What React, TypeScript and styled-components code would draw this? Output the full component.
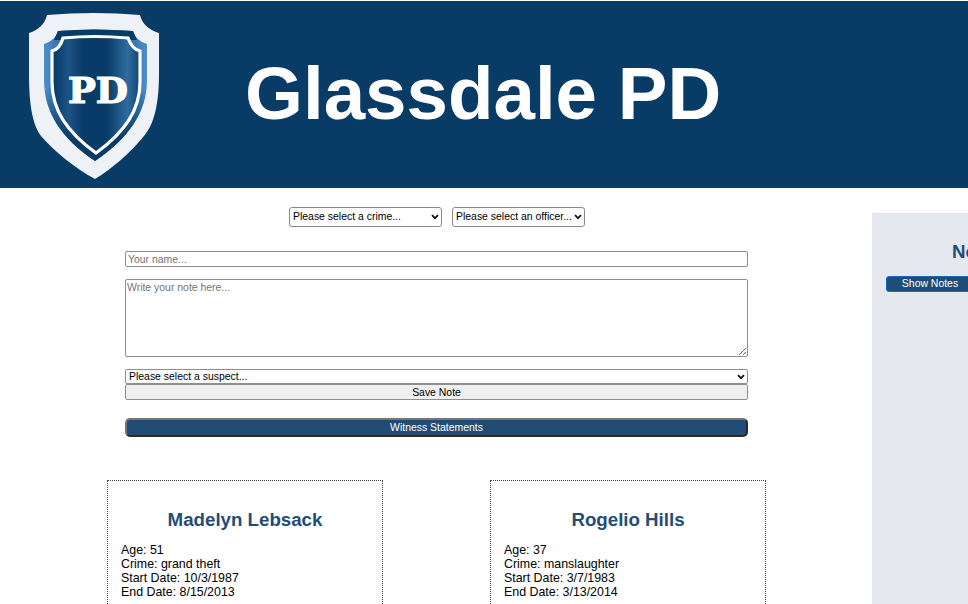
import React from "react";
import styled, { createGlobalStyle, css } from "styled-components";

const suspects = [
  { name: "Madelyn Lebsack", age: 51, crime: "grand theft", start: "10/3/1987", end: "8/15/2013" },
  { name: "Rogelio Hills", age: 37, crime: "manslaughter", start: "3/7/1983", end: "3/13/2014" },
];

const rimPath =
  "M29 19 Q65 16 104 19 Q107 29 118 32 L118 68 C118 100 100 126 66 149 C32 126 15 100 15 68 L15 32 Q26 29 29 19 Z";

const Logo: React.FC = () => (
  <LogoSvg viewBox="0 0 130 168" aria-label="Glassdale PD badge">
    <defs>
      <linearGradient id="rim" x1="0" x2="1" y1="0" y2="0">
        <stop offset="0" stopColor="#4d8fcb" />
        <stop offset="0.2" stopColor="#2c6ba6" />
        <stop offset="0.8" stopColor="#2c6ba6" />
        <stop offset="1" stopColor="#4d8fcb" />
      </linearGradient>
      <linearGradient id="rimFade" x1="0" x2="0" y1="0" y2="1">
        <stop offset="0.45" stopColor="#083b66" stopOpacity="0" />
        <stop offset="0.85" stopColor="#083b66" stopOpacity="1" />
      </linearGradient>
      <linearGradient id="core" x1="0" x2="1" y1="0" y2="0">
        <stop offset="0" stopColor="#083b66" />
        <stop offset="0.1" stopColor="#0f4674" />
        <stop offset="0.18" stopColor="#1d5488" />
        <stop offset="0.36" stopColor="#083b66" />
        <stop offset="0.62" stopColor="#083b66" />
        <stop offset="0.86" stopColor="#2f6c9f" />
        <stop offset="1" stopColor="#0f4674" />
      </linearGradient>
    </defs>
    <path
      d="M18 3 Q65 -1 111 3 Q114 16 130 21 L130 62 C130 100 122 116 115 124 C102 140 84 156 66 167 C46 156 26 140 12 124 C5 114 0 98 0 62 L0 21 Q15 16 18 3 Z"
      fill="#eef2f6"
    />
    <path d={rimPath} fill="url(#rim)" />
    <path d={rimPath} fill="url(#rimFade)" />
    <path d="M29 19 Q65 16 104 19 L108 28 L25 28 Z" fill="#083b66" />
    <path
      d="M34 26 Q65 23 99 26 Q103 37 111 39 L111 70 C111 98 96 120 67 141 C38 120 23 98 23 70 L23 39 Q31 37 34 26 Z"
      fill="url(#core)"
      stroke="#ffffff"
      strokeWidth="3.2"
    />
    <PdMark x="39" y="91" textLength="60" lengthAdjust="spacingAndGlyphs">
      PD
    </PdMark>
  </LogoSvg>
);

export default function App() {
  return (
    <Page>
      <GlobalStyle />
      <Banner>
        <Logo />
        <Title>Glassdale PD</Title>
      </Banner>
      <Content>
        <Main>
          <Filters>
            <CrimeSelect>
              <option>Please select a crime...</option>
            </CrimeSelect>
            <OfficerSelect>
              <option>Please select an officer...</option>
            </OfficerSelect>
          </Filters>
          <NoteForm>
            <NameInput placeholder="Your name..." />
            <NoteText placeholder="Write your note here..." />
            <SuspectGroup>
              <SuspectSelect>
                <option>Please select a suspect...</option>
              </SuspectSelect>
              <SaveButton type="button">Save Note</SaveButton>
            </SuspectGroup>
            <WitnessButton type="button">Witness Statements</WitnessButton>
          </NoteForm>
          <Cards>
            {suspects.map((s) => (
              <Card key={s.name}>
                <CardName>{s.name}</CardName>
                <CardLine>Age: {s.age}</CardLine>
                <CardLine>Crime: {s.crime}</CardLine>
                <CardLine>Start Date: {s.start}</CardLine>
                <CardLine>End Date: {s.end}</CardLine>
              </Card>
            ))}
          </Cards>
        </Main>
        <Sidebar>
          <SidebarTitle>Notes</SidebarTitle>
          <ShowNotes type="button">Show Notes</ShowNotes>
        </Sidebar>
      </Content>
    </Page>
  );
}

const GlobalStyle = createGlobalStyle`
  html, body {
    margin: 0;
    padding: 0;
    background: #fff;
    overflow: hidden;
  }
  ::placeholder {
    color: #757575;
  }
`;

const chevron = css`
  appearance: none;
  background-color: #fff;
  background-image: url("data:image/svg+xml,%3Csvg xmlns='http://www.w3.org/2000/svg' width='8' height='6' viewBox='0 0 8 6'%3E%3Cpath d='M1 1.2 L4 4.2 L7 1.2' fill='none' stroke='%23111' stroke-width='1.7'/%3E%3C/svg%3E");
  background-repeat: no-repeat;
  background-position: right 2px center;
`;

const Page = styled.div`
  width: 968px;
  height: 604px;
  overflow: hidden;
  font-family: "Liberation Sans", Arial, sans-serif;
  color: #000;
`;

const Banner = styled.header`
  display: flex;
  align-items: center;
  height: 187px;
  margin-top: 1px;
  padding-left: 29px;
  box-sizing: border-box;
  background: #083b66;
`;

const LogoSvg = styled.svg`
  width: 130px;
  height: 168px;
  flex-shrink: 0;
  margin-top: 2px;
  overflow: visible;
`;

const PdMark = styled.text`
  font-family: "DejaVu Serif", serif;
  font-weight: 900;
  font-size: 35px;
  fill: #fff;
  stroke: #fff;
  stroke-width: 1.2px;
`;

const Title = styled.h1`
  margin: 0 0 3px 86px;
  font-size: 74.5px;
  font-weight: 700;
  color: #fff;
  white-space: nowrap;
`;

const Content = styled.div`
  display: flex;
  align-items: flex-start;
  width: 1100px;
`;

const Main = styled.main`
  width: 872px;
  flex-shrink: 0;
  padding-top: 19px;
  box-sizing: border-box;
`;

const Filters = styled.div`
  display: flex;
  justify-content: center;
  gap: 10px;
  padding-left: 2px;
`;

const BaseSelect = styled.select`
  ${chevron}
  height: 20px;
  padding: 0 0 1px 3px;
  font-family: inherit;
  font-size: 10.45px;
  color: #000;
  border: 1px solid #8a8a8a;
  border-radius: 3px;
`;

const CrimeSelect = styled(BaseSelect)`
  width: 153px;
`;

const OfficerSelect = styled(BaseSelect)`
  width: 133px;
`;

const NoteForm = styled.form`
  display: flex;
  flex-direction: column;
  width: 623px;
  margin: 24px 0 0 125px;
`;

const fieldBorder = css`
  box-sizing: border-box;
  border: 1px solid #8f8f8f;
  border-radius: 2px;
  font-family: inherit;
  font-size: 10.45px;
`;

const NameInput = styled.input`
  ${fieldBorder}
  height: 16px;
  padding: 0 2px;
`;

const NoteText = styled.textarea`
  ${fieldBorder}
  height: 78px;
  margin-top: 12px;
  padding: 2px 1px;
  display: block;
`;

const SuspectGroup = styled.div`
  display: flex;
  flex-direction: column;
  margin-top: 12px;
`;

const SuspectSelect = styled.select`
  ${fieldBorder}
  ${chevron}
  height: 15px;
  padding: 0 0 1px 3px;
  color: #000;
`;

const SaveButton = styled.button`
  ${fieldBorder}
  height: 16px;
  padding: 0;
  background: #efefef;
  color: #000;
`;

const WitnessButton = styled.button`
  height: 19px;
  margin-top: 18px;
  padding: 0;
  font-family: inherit;
  font-size: 10.45px;
  color: #fff;
  background: #1f4d76;
  border: 2px solid;
  border-color: #767676 #2a2a2a #2a2a2a #767676;
  border-radius: 5px;
`;

const Cards = styled.section`
  display: flex;
  gap: 107px;
  margin: 43px 0 0 107px;
`;

const Card = styled.article`
  width: 276px;
  height: 200px;
  box-sizing: border-box;
  padding: 28px 13px 0;
  border: 1px dotted #444;
`;

const CardName = styled.h2`
  margin: 0 0 12px;
  font-size: 18.7px;
  line-height: 22px;
  font-weight: 700;
  text-align: center;
  color: #1f4d76;
`;

const CardLine = styled.div`
  font-size: 12.4px;
  line-height: 14px;
`;

const Sidebar = styled.aside`
  width: 212px;
  height: 500px;
  flex-shrink: 0;
  margin-top: 25px;
  padding: 28px 14px 0;
  box-sizing: border-box;
  background: #e5e8ee;
`;

const SidebarTitle = styled.h2`
  margin: 0 0 13px;
  font-size: 18.7px;
  line-height: 22px;
  font-weight: 700;
  text-align: center;
  color: #1f4d76;
`;

const ShowNotes = styled.button`
  display: block;
  width: 88px;
  height: 16px;
  padding: 0 0 1px;
  font-family: inherit;
  font-size: 10.45px;
  color: #fff;
  background: #1f4d76;
  border: 1.5px solid #1a68bd;
  border-radius: 3px;
`;
